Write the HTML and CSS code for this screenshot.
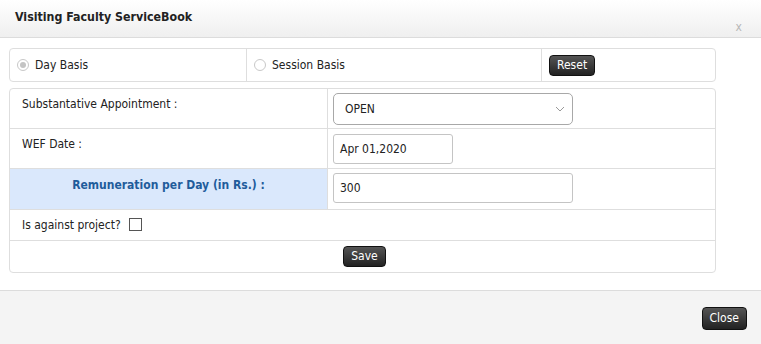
FILE: index.html
```html
<!DOCTYPE html>
<html lang="en">
<head>
  <meta charset="UTF-8">
  <title>Visiting Faculty ServiceBook</title>
  <link rel="stylesheet" href="styles.css">
</head>
<body>
  <div class="dialog">
    <!-- header -->
    <div class="dlg-head">
      <span class="dlg-title">Visiting Faculty ServiceBook</span>
      <span class="dlg-x">x</span>
    </div>

    <!-- body -->
    <div class="dlg-body">
      <div class="basis">
        <label class="basis-cell cell-day"><span class="radio radio-on"></span>Day Basis</label>
        <label class="basis-cell cell-session"><span class="radio"></span>Session Basis</label>
        <div class="basis-cell cell-reset"><button class="btn">Reset</button></div>
      </div>

      <div class="form">
        <div class="lbl r1">Substantative Appointment :</div>
        <div class="fld r1">
          <div class="select"><span>OPEN</span>
            <svg width="10" height="6" viewBox="0 0 10 6"><path d="M1 1l4 4 4-4" fill="none" stroke="#999" stroke-width="1"/></svg>
          </div>
        </div>

        <div class="lbl r2">WEF Date :</div>
        <div class="fld r2"><div class="input input-date">Apr 01,2020</div></div>

        <div class="lbl lbl-hl r3">Remuneration per Day (in Rs.) :</div>
        <div class="fld r3"><div class="input input-wide">300</div></div>

        <div class="lbl full r4">Is against project? <span class="check"></span></div>

        <div class="full save-row"><button class="btn btn-save">Save</button></div>
      </div>
    </div>

    <!-- footer -->
    <div class="dlg-foot">
      <button class="btn btn-close">Close</button>
    </div>
  </div>
</body>
</html>
```

FILE: styles.css
```css
/* ===== base ===== */
body {
  margin: 0;
  background: #fff;
  font-family: "DejaVu Sans Condensed", "DejaVu Sans", sans-serif;
  font-size: 12px;
  color: #222;
}

.dialog {
  width: 761px;
  height: 344px;
  display: flex;
  flex-direction: column;
}

/* ===== header ===== */
.dlg-head {
  height: 38px;
  box-sizing: border-box;
  border-bottom: 1px solid #dcdcdc;
  background: linear-gradient(#ffffff, #efefef);
  display: flex;
  justify-content: space-between;
  padding: 0 19px 0 15px;
}
.dlg-title {
  font-weight: bold;
  font-size: 12.3px;
  padding-top: 10px;
  color: #222;
}
.dlg-x {
  color: #b8b8b8;
  font-size: 12px;
  padding-top: 20px;
}

/* ===== body ===== */
.dlg-body {
  height: 252px;
  box-sizing: border-box;
  padding: 10px 45px 0 9px;
}

.basis {
  display: flex;
  height: 34px;
  box-sizing: border-box;
  border: 1px solid #dedede;
  border-radius: 4px;
}
.basis-cell {
  display: flex;
  align-items: center;
  padding-left: 7px;
  border-right: 1px solid #dedede;
}
.basis-cell:last-child { border-right: none; }
.cell-day { width: 229px; }
.cell-session { width: 287px; }
.cell-reset { flex: 1; padding-left: 7px; }

.radio {
  width: 10px;
  height: 10px;
  border: 1px solid #c8c8c8;
  border-radius: 50%;
  margin-right: 6px;
  background: #fff;
  position: relative;
}
.radio-on::after {
  content: "";
  position: absolute;
  left: 2px;
  top: 2px;
  width: 6px;
  height: 6px;
  border-radius: 50%;
  background: #c4c4c4;
}

.btn {
  font-family: inherit;
  font-size: 12px;
  color: #fff;
  background: linear-gradient(#555, #222);
  border: 1px solid #111;
  border-radius: 4px;
  padding: 2px 7px 3px;
  line-height: 14px;
}

/* ===== form grid ===== */
.form {
  margin-top: 6px;
  display: grid;
  grid-template-columns: 318px 1fr;
  grid-template-rows: 40px 40px 41px 31px 31px;
  border: 1px solid #dedede;
  border-radius: 4px;
}
.form > div {
  box-sizing: border-box;
  border-bottom: 1px solid #dedede;
}
.form > div.save-row { border-bottom: none; }
.lbl {
  padding: 8px 0 0 12px;
  border-right: 1px solid #dedede;
}
.lbl.full {
  grid-column: 1 / span 2;
  border-right: none;
  padding-top: 8px;
}
.lbl-hl {
  background: #dae8fc;
  color: #1f5c9b;
  font-weight: bold;
  text-align: center;
  padding: 9px 0 0 0;
}
.fld { padding: 4px 0 0 5px; }
.r2 .input { margin-top: 1px; }

.save-row {
  grid-column: 1 / span 2;
  display: flex;
  justify-content: center;
  align-items: center;
  padding-left: 4px;
}

.select, .input {
  height: 30px;
  box-sizing: border-box;
  border: 1px solid #c4c4c4;
  border-radius: 3px;
  display: flex;
  align-items: center;
  padding-left: 6px;
}
.select {
  width: 240px;
  border-color: #a8a8a8;
  border-radius: 5px;
  padding: 0 7px 0 11px;
  justify-content: space-between;
  height: 32px;
}
.input-date { width: 120px; }
.input-wide { width: 240px; }

.check {
  display: inline-block;
  width: 11px;
  height: 11px;
  border: 1px solid #555;
  vertical-align: -2px;
  margin-left: 5px;
}

/* ===== footer ===== */
.dlg-foot {
  height: 54px;
  border-top: 1px solid #dcdcdc;
  background: #f4f4f4;
  display: flex;
  justify-content: flex-end;
  align-items: flex-start;
  padding: 16px 14px 0 0;
  box-sizing: border-box;
}
.btn-close { padding: 3px 7px 4px; }
```
